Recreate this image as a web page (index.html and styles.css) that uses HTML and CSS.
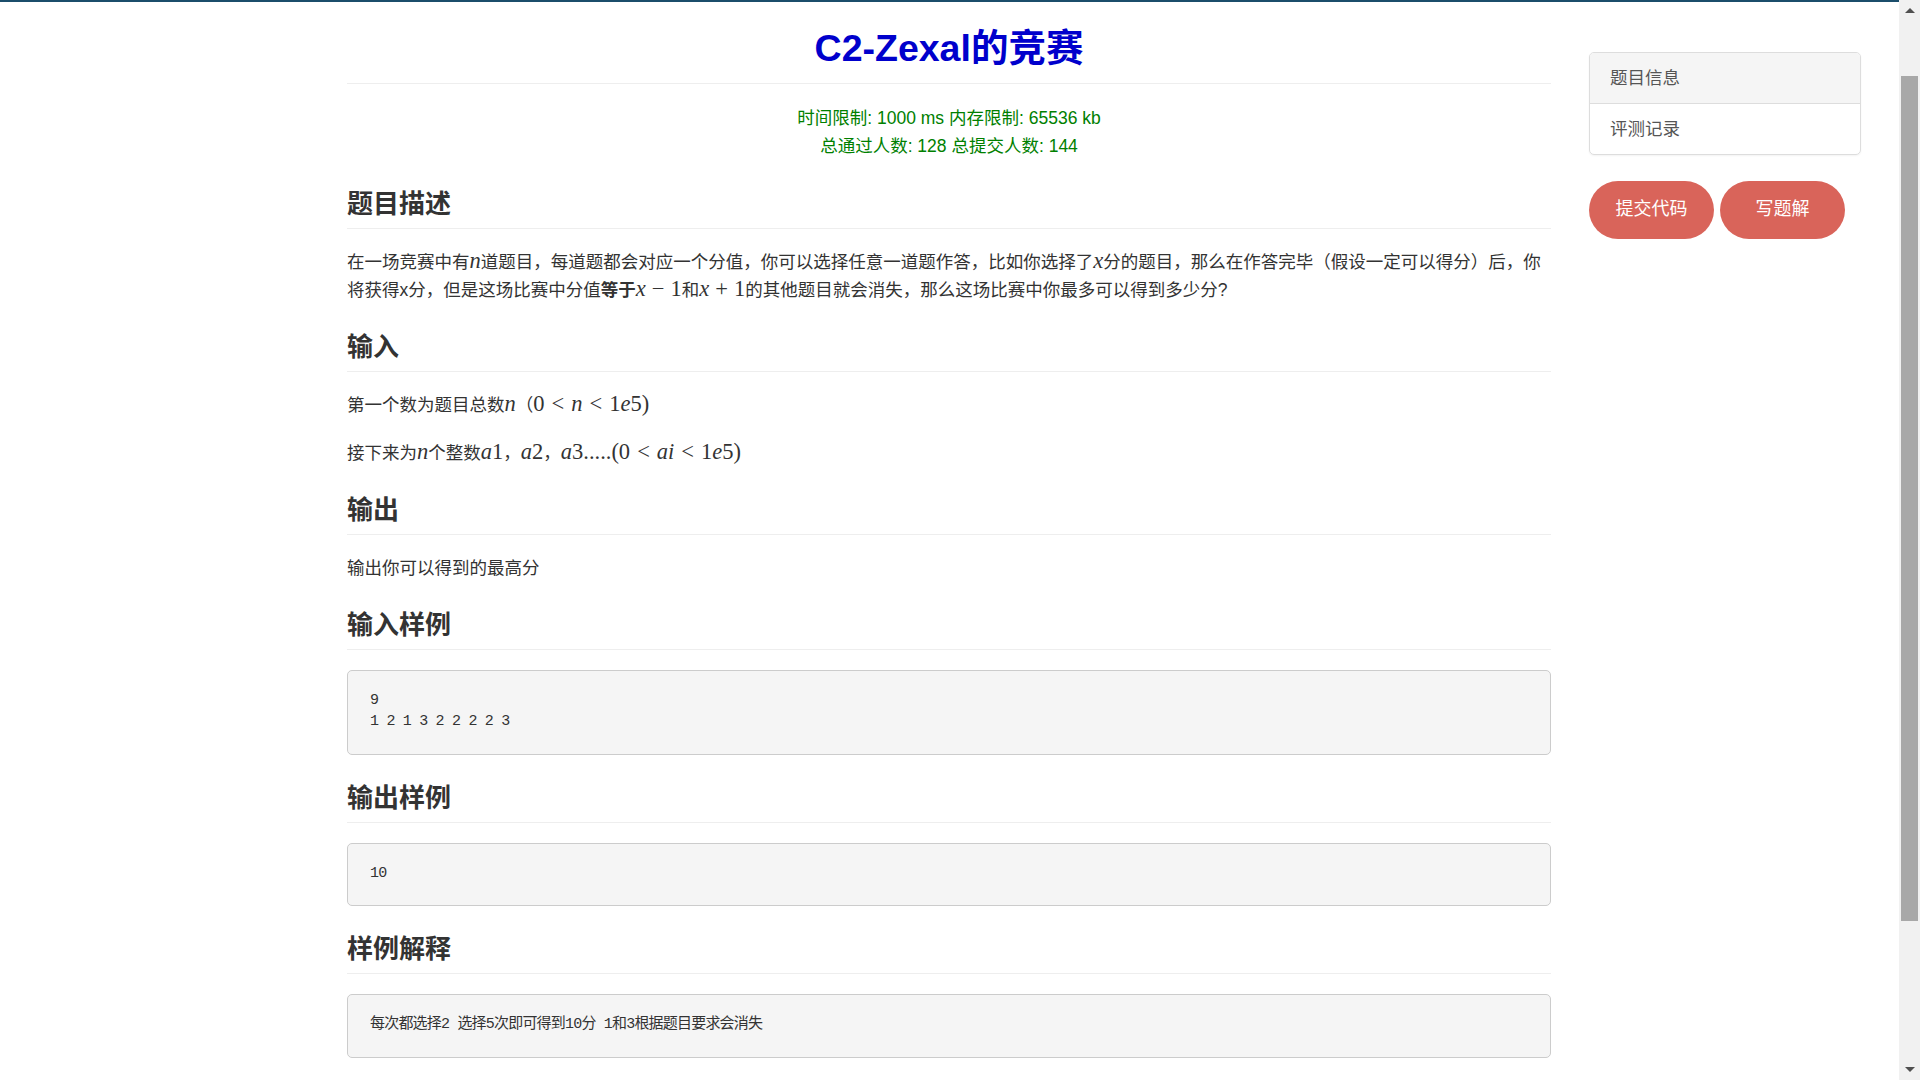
FILE: index.html
```html
<!DOCTYPE html>
<html lang="zh-CN">
<head>
<meta charset="utf-8">
<title>C2-Zexal的竞赛</title>
<link rel="stylesheet" href="styles.css">
</head>
<body>
<div class="topbar"></div>
<div class="page">
  <main class="problem">
    <h1 class="title">C2-Zexal的竞赛</h1>
    <div class="limits">
      <div>时间限制: 1000 ms 内存限制: 65536 kb</div>
      <div>总通过人数: 128 总提交人数: 144</div>
    </div>

    <h2>题目描述</h2>
    <p>在一场竞赛中有<span class="m"><i>n</i></span>道题目，每道题都会对应一个分值，你可以选择任意一道题作答，比如你选择了<span class="m"><i>x</i></span>分的题目，那么在作答完毕（假设一定可以得分）后，你将获得x分，但是这场比赛中分值<b>等于</b><span class="m"><i>x</i><span class="bin">−</span>1</span>和<span class="m"><i>x</i><span class="bin">+</span>1</span>的其他题目就会消失，那么这场比赛中你最多可以得到多少分?</p>

    <h2>输入</h2>
    <p>第一个数为题目总数<span class="m"><i>n</i></span>（<span class="m">0<span class="rel">&lt;</span><i>n</i><span class="rel">&lt;</span>1<i>e</i>5)</span></p>
    <p class="last">接下来为<span class="m"><i>n</i></span>个整数<span class="m"><i>a</i>1</span>，<span class="m"><i>a</i>2</span>，<span class="m"><i>a</i>3.....(0<span class="rel">&lt;</span><i>ai</i><span class="rel">&lt;</span>1<i>e</i>5)</span></p>

    <h2>输出</h2>
    <p>输出你可以得到的最高分</p>

    <h2>输入样例</h2>
    <pre>9
1 2 1 3 2 2 2 2 3</pre>

    <h2>输出样例</h2>
    <pre>10</pre>

    <h2>样例解释</h2>
    <pre>每次都选择2 选择5次即可得到10分 1和3根据题目要求会消失</pre>
  </main>

  <aside class="side">
    <ul class="menu">
      <li class="active">题目信息</li>
      <li>评测记录</li>
    </ul>
    <div class="btns">
      <button class="btn">提交代码</button>
      <button class="btn">写题解</button>
    </div>
  </aside>
</div>

<div class="scrollbar" aria-hidden="true">
  <div class="sb-arrow sb-up"></div>
  <div class="sb-track"><div class="sb-thumb"></div></div>
  <div class="sb-arrow sb-down"></div>
</div>
</body>
</html>
```

FILE: styles.css
```css
html, body {
  margin: 0;
  padding: 0;
}

body {
  font-family: "Liberation Sans", "Noto Sans CJK SC", sans-serif;
  font-size: 17.5px;
  color: #333;
  background: #fff;
}

.topbar {
  height: 2px;
  background: #1b4e6b;
}

.page {
  display: flex;
  align-items: flex-start;
  gap: 38px;
  padding-left: 347px;
  padding-bottom: 190px;
}

.problem {
  width: 1204px;
}

.title {
  margin: 26px 0 0;
  padding-bottom: 14px;
  border-bottom: 1px solid #eee;
  font-size: 37.5px;
  line-height: 41px;
  font-weight: bold;
  color: #0000cc;
  text-align: center;
}

.limits {
  margin-top: 20px;
  text-align: center;
  color: #008000;
  line-height: 28px;
}

h2 {
  margin: 27px 0 19px;
  padding-bottom: 8px;
  border-bottom: 1px solid #eee;
  font-size: 26px;
  line-height: 32px;
  font-weight: bold;
  color: #333;
}

h2:has(+ pre) {
  margin-bottom: 20px;
}

.limits + h2 {
  margin-top: 28px;
}

p {
  margin: 0 0 20px;
  line-height: 28px;
}

p.last {
  margin-bottom: 27px;
}

p b {
  font-weight: bold;
}

.m {
  font-family: "Liberation Serif", "DejaVu Serif", serif;
  font-size: 22.5px;
  line-height: 1;
}

.m i {
  font-style: italic;
}

.rel {
  margin: 0 7px;
}

.bin {
  margin: 0 6px;
}

pre {
  margin: 0 0 20px;
  padding: 19px 22px 21.5px;
  background: #f5f5f5;
  border: 1px solid #ccc;
  border-radius: 5px;
  font-family: "Liberation Mono", "Noto Sans CJK SC", monospace;
  font-size: 15px;
  letter-spacing: -0.8px;
  line-height: 21px;
  color: #333;
  white-space: pre;
}

.side {
  width: 272px;
  margin-top: 50px;
}

.menu {
  list-style: none;
  margin: 0;
  padding: 0;
  border: 1px solid #ddd;
  border-radius: 5px;
  overflow: hidden;
  box-shadow: 0 1px 2px rgba(0, 0, 0, 0.05);
}

.menu li {
  padding: 0 20px;
  line-height: 50px;
  color: #555;
}

.menu li + li {
  border-top: 1px solid #ddd;
}

.menu li.active {
  background: #f5f5f5;
}

.btns {
  display: flex;
  gap: 6px;
  margin-top: 26px;
}

.btn {
  width: 125px;
  height: 58px;
  padding: 0 0 3px;
  border: none;
  border-radius: 29px;
  background: #d9645a;
  color: #fff;
  font-family: "Liberation Sans", "Noto Sans CJK SC", sans-serif;
  font-size: 18px;
  line-height: 1;
  cursor: pointer;
}

/* fake browser scrollbar (page is scrolled a little, as in the capture) */
.scrollbar {
  position: fixed;
  top: 0;
  right: 0;
  width: 21px;
  height: 100vh;
  background: #f1f1f1;
  display: flex;
  flex-direction: column;
}

.sb-arrow {
  height: 21px;
  display: flex;
  align-items: center;
  justify-content: center;
}

.sb-arrow::before {
  content: "";
  width: 0;
  height: 0;
  border-left: 5px solid transparent;
  border-right: 5px solid transparent;
}

.sb-up::before {
  border-bottom: 5px solid #505050;
}

.sb-down::before {
  border-top: 5px solid #505050;
}

.sb-track {
  flex: 1;
  padding: 55px 2px 0 2px;
}

.sb-thumb {
  height: 845px;
  background: #a8a8a8;
}
```
